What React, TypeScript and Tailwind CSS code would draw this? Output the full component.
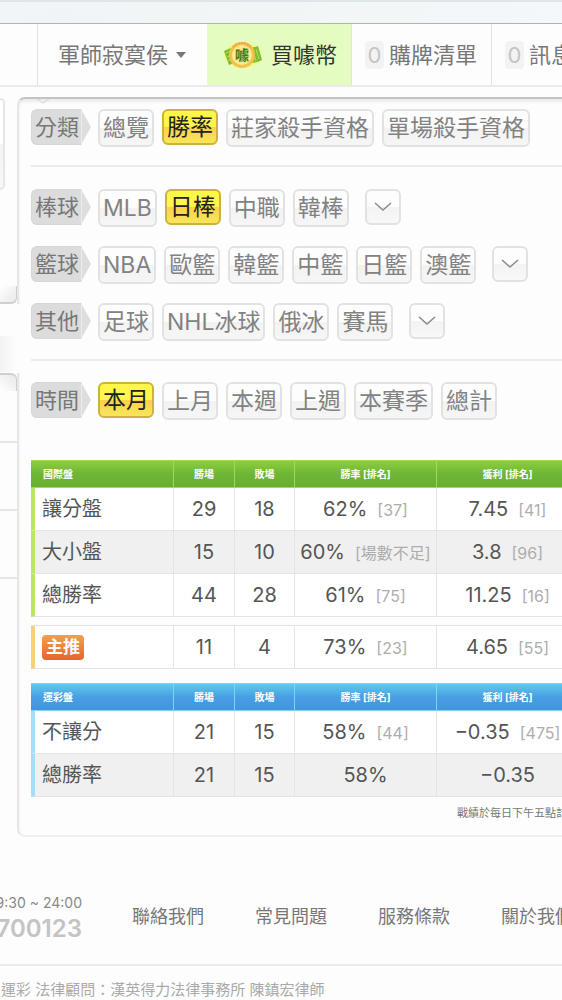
import React from 'react';

type Option = { text: string; active?: boolean };
type Group = { label: string; options: Option[]; more?: boolean };
type Row = {
  name: string;
  win: number;
  lose: number;
  rate: string;
  rateRank?: string;
  profit: string;
  profitRank?: string;
};

const category: Group = {
  label: '分類',
  options: [
    { text: '總覽' },
    { text: '勝率', active: true },
    { text: '莊家殺手資格' },
    { text: '單場殺手資格' },
  ],
};

const leagues: Group[] = [
  {
    label: '棒球',
    options: [{ text: 'MLB' }, { text: '日棒', active: true }, { text: '中職' }, { text: '韓棒' }],
    more: true,
  },
  {
    label: '籃球',
    options: [
      { text: 'NBA' },
      { text: '歐籃' },
      { text: '韓籃' },
      { text: '中籃' },
      { text: '日籃' },
      { text: '澳籃' },
    ],
    more: true,
  },
  {
    label: '其他',
    options: [{ text: '足球' }, { text: 'NHL冰球' }, { text: '俄冰' }, { text: '賽馬' }],
    more: true,
  },
];

const period: Group = {
  label: '時間',
  options: [
    { text: '本月', active: true },
    { text: '上月' },
    { text: '本週' },
    { text: '上週' },
    { text: '本賽季' },
    { text: '總計' },
  ],
};

const international: Row[] = [
  { name: '讓分盤', win: 29, lose: 18, rate: '62%', rateRank: '[37]', profit: '7.45', profitRank: '[41]' },
  { name: '大小盤', win: 15, lose: 10, rate: '60%', rateRank: '[場數不足]', profit: '3.8', profitRank: '[96]' },
  { name: '總勝率', win: 44, lose: 28, rate: '61%', rateRank: '[75]', profit: '11.25', profitRank: '[16]' },
];

const featured: Row[] = [
  { name: '主推', win: 11, lose: 4, rate: '73%', rateRank: '[23]', profit: '4.65', profitRank: '[55]' },
];

const lottery: Row[] = [
  { name: '不讓分', win: 21, lose: 15, rate: '58%', rateRank: '[44]', profit: '−0.35', profitRank: '[475]' },
  { name: '總勝率', win: 21, lose: 15, rate: '58%', profit: '−0.35' },
];

const tones = {
  green: {
    head: 'bg-linear-to-b from-[#8fd03f] via-[#6fb637] to-[#66ad31]',
    line: 'border-[#9ddb5a]',
    bar: 'border-l-[#b9e668]',
  },
  orange: { head: '', line: '', bar: 'border-l-[#fbcf7c]' },
  blue: {
    head: 'bg-linear-to-b from-[#62cdf0] via-[#489fe2] to-[#4093de]',
    line: 'border-[#7fd3f5]',
    bar: 'border-l-[#9fe0fc]',
  },
};

function CoinIcon() {
  return (
    <svg width="40" height="32" viewBox="0 0 40 32" aria-hidden="true">
      <ellipse cx="20" cy="16" rx="19" ry="13" fill="#f0fb7c" opacity="0.7" />
      <path d="M1 12 Q8 8 14 9 L24 22 Q14 22 6 26 Z" fill="#7dbb35" />
      <path d="M24 8 Q31 9 35 7 L39 21 Q31 25 23 24 Z" fill="#7dbb35" />
      <path d="M3 14 Q8 11 13 12 M4 18 Q8 15 12 16 M5 22 Q8 19 13 20 M33 10 L36 20 M30 11 L33 22" fill="none" stroke="#b4df62" />
      <circle cx="19" cy="16" r="13" fill="#f4c24a" />
      <circle cx="19" cy="16" r="10" fill="#fdea93" />
      <path d="M10 8 A12 12 0 0 1 28 8" fill="none" stroke="#f5a04a" strokeWidth="2" strokeDasharray="2 1" />
      <text x="19" y="21" textAnchor="middle" fontSize="14" fontWeight="700" fill="#35591c" stroke="#7fc142" strokeWidth="0.4">
        噱
      </text>
    </svg>
  );
}

// 分類標籤，右側帶箭頭
function GroupLabel({ text }: { text: string }) {
  return (
    <div className="mr-[7px] flex h-9 shrink-0 items-center">
      <span className="flex h-9 w-[50px] items-center justify-center rounded-l-md border border-r-0 border-[#d6d6d6] bg-[#dcdcdc] pl-px text-[22px] leading-9 text-[#777]">
        {text}
      </span>
      <svg width="10" height="36" viewBox="0 0 10 36" aria-hidden="true">
        <path d="M0 0 L10 18 L0 36 Z" fill="#dedede" />
        <path d="M0.5 0 V36" stroke="#ececec" />
      </svg>
    </div>
  );
}

function OptionButton({ text, active }: Option) {
  const look = active
    ? 'h-9 border-[#cdb23c] bg-linear-to-b from-[#fff64c] from-50% via-[#fad148] via-50% to-[#f8e65a] text-[#222]'
    : 'h-[38px] border-[#e2e2e2] bg-linear-to-b from-[#fdfdfd] from-50% via-[#f2f2f2] via-50% to-[#f6f6f6] text-[#828282]';
  return (
    <button
      type="button"
      aria-pressed={!!active}
      className={`flex shrink-0 items-center rounded-md border-2 px-[3px] text-[23px] leading-8 whitespace-nowrap ${look}`}
    >
      {text}
    </button>
  );
}

function FilterRow({ group }: { group: Group }) {
  return (
    <div className="flex h-[38px] items-start">
      <GroupLabel text={group.label} />
      <div className="flex gap-2">
        {group.options.map((o) => (
          <OptionButton key={o.text} {...o} />
        ))}
      </div>
      {group.more && (
        <button
          type="button"
          aria-label={`更多${group.label}`}
          className="ml-4 flex size-9 items-center justify-center rounded-md border-2 border-[#e2e2e2] bg-linear-to-b from-[#fdfdfd] from-50% via-[#f3f3f3] via-50% to-[#f8f8f8]"
        >
          <svg width="18" height="10" viewBox="0 0 18 10" fill="none" aria-hidden="true">
            <path d="M1 1 L9 8 L17 1" stroke="#8c8c8c" strokeWidth="1.6" />
          </svg>
        </button>
      )}
    </div>
  );
}

function ScoreTable({ title, rows, tone }: { title?: string; rows: Row[]; tone: keyof typeof tones }) {
  const { head, line, bar } = tones[tone];
  const th = `border-y border-l ${line} font-bold`;
  const td = 'border-b border-l border-[#e4e4e4] text-center whitespace-nowrap';
  return (
    <table
      className={`w-full table-fixed border-separate border-spacing-0 text-xl leading-6 text-[#555] ${
        title ? '' : 'border-t border-[#e4e4e4]'
      }`}
    >
      <colgroup>
        <col className="w-[142px]" />
        <col className="w-[61px]" />
        <col className="w-[60px]" />
        <col />
        <col />
      </colgroup>
      {title && (
        <thead>
          <tr className={`h-7 text-[10px] leading-3 text-white ${head}`}>
            <th scope="col" className={`border-y pl-3 text-left font-bold ${line}`}>{title}</th>
            <th scope="col" className={th}>勝場</th>
            <th scope="col" className={th}>敗場</th>
            <th scope="col" className={th}>勝率 [排名]</th>
            <th scope="col" className={th}>獲利 [排名]</th>
          </tr>
        </thead>
      )}
      <tbody>
        {rows.map((r, i) => (
          <tr key={r.name} className={`h-[43px] ${i % 2 ? 'bg-[#f0f0f0]' : 'bg-white'}`}>
            <th scope="row" className={`border-b border-l-4 border-[#e4e4e4] pl-[7px] text-left font-normal ${bar}`}>
              {tone === 'orange' ? (
                <span className="flex h-[25px] w-[42px] items-center justify-center rounded bg-linear-to-b from-[#f2a04c] to-[#e4652a] text-[17px] font-bold text-white">
                  {r.name}
                </span>
              ) : (
                r.name
              )}
            </th>
            <td className={td}>{r.win}</td>
            <td className={td}>{r.lose}</td>
            <td className={td}>
              {r.rate}
              {r.rateRank && <span className="ml-[10px] text-base leading-6 text-[#adadad]">{r.rateRank}</span>}
            </td>
            <td className={td}>
              {r.profit}
              {r.profitRank && <span className="ml-[10px] text-base leading-6 text-[#adadad]">{r.profitRank}</span>}
            </td>
          </tr>
        ))}
      </tbody>
    </table>
  );
}

function Header() {
  return (
    <header>
      <div className="h-6 border-t-2 border-b border-t-[#dfe6ea] border-b-[#b0b3b6] bg-linear-to-r from-[#f1f4f8] via-[#f1f6f5] to-[#f4f7fb]" />
      <nav className="flex h-[63px] border-b-2 border-[#ebebeb] text-[22px] leading-8 whitespace-nowrap text-[#777]">
        <button type="button" className="ml-[37px] flex w-[170px] shrink-0 items-center border-l border-[#e2e2e2] pl-5">
          軍師寂寞侯
          <svg className="ml-2" width="10" height="6" viewBox="0 0 10 6" aria-hidden="true">
            <path d="M0 0 H10 L5 6 Z" fill="#777" />
          </svg>
        </button>
        <a href="#coin" className="flex w-36 shrink-0 items-center bg-[#e4fcc0] pl-4 text-[#333]">
          <CoinIcon />
          <span className="ml-2">買噱幣</span>
        </a>
        <a href="#cart" className="flex w-[140px] shrink-0 items-center border-l border-[#e2e2e2] pl-[13px]">
          <span className="flex h-7 w-[19px] items-center justify-center rounded-sm bg-[#f3f3f3] text-[#c4c4c4]">0</span>
          <span className="ml-[5px]">購牌清單</span>
        </a>
        <a href="#message" className="flex shrink-0 items-center border-l border-[#e2e2e2] pl-[13px]">
          <span className="flex h-7 w-[19px] items-center justify-center rounded-sm bg-[#f3f3f3] text-[#c4c4c4]">0</span>
          <span className="ml-[5px]">訊息</span>
        </a>
      </nav>
    </header>
  );
}

// 左側選單，只露出右緣
function Sidebar() {
  return (
    <aside className="flex w-[17px] shrink-0 flex-col">
      <div className="mt-px mr-3 h-[92px] rounded-r-lg border-2 border-l-0 border-[#e6e6e6] bg-linear-to-b from-white from-50% via-[#f3f3f3] via-50% to-[#f8f8f8]" />
      <div className="mt-24 h-[18px] rounded-br-md border-r border-b-2 border-[#cfcfcf] bg-linear-to-br from-white to-[#e8e8e8]" />
      <div className="relative -mr-1 h-[69px] bg-[#fdfdfd] pt-8">
        <div className="mr-1 h-9 bg-linear-to-r from-[#f3f3f3] to-[#fdfdfd]" />
      </div>
      <div className="h-[18px] rounded-tr-md border-t-2 border-r border-[#cfcfcf] bg-linear-to-tr from-white to-[#e8e8e8]" />
      <div className="h-[52px] border-b-2 border-[#e6e6e6]" />
      <div className="h-[68px] border-b-2 border-[#e6e6e6]" />
      <div className="h-[68px] border-b-2 border-[#e6e6e6]" />
    </aside>
  );
}

function Footer() {
  return (
    <footer className="whitespace-nowrap">
      <div className="flex h-[129px] items-center border-b-2 border-[#ebebeb] pt-8">
        <div className="flex w-[82px] shrink-0 flex-col items-end">
          <span className="text-sm leading-6 text-[#888]">9:30 ~ 24:00</span>
          <span className="text-2xl leading-7 font-semibold text-[#c4c4c4]">700123</span>
        </div>
        <nav className="ml-[50px] flex gap-[51px] text-lg text-[#777]">
          <a href="#contact">聯絡我們</a>
          <a href="#faq">常見問題</a>
          <a href="#terms">服務條款</a>
          <a href="#about">關於我們</a>
        </nav>
      </div>
      <p className="pt-3 pl-px text-[15px] leading-6 text-[#aaa]">運彩 法律顧問：漢英得力法律事務所 陳鎮宏律師</p>
    </footer>
  );
}

export default function App() {
  return (
    <div className="w-full overflow-x-hidden bg-[#fdfdfd] font-[Inter,'Noto_Sans_CJK_TC',sans-serif]">
      <Header />
      <div className="mt-[10px] flex">
        <Sidebar />
        <main className="-mr-8 min-w-0 flex-1 rounded-l-lg border-t-2 border-b-2 border-l-2 border-t-[#c4c4c4] border-b-[#efefef] border-l-[#e6e6e6] pr-4 pl-3 shadow-[inset_0_3px_3px_#ececec]">
          <svg className="ml-[6px]" width="12" height="6" viewBox="0 0 12 6" fill="none" aria-hidden="true">
            <path d="M0 0 L6 4 L12 0" stroke="#d4d4d4" />
          </svg>
          <div className="mt-1">
            <FilterRow group={category} />
          </div>
          <hr className="mt-[18px] mb-[22px] border-t-2 border-[#ebebeb]" />
          <div className="flex flex-col gap-[19px]">
            {leagues.map((g) => (
              <FilterRow key={g.label} group={g} />
            ))}
          </div>
          <hr className="mt-[18px] mb-[21px] border-t-2 border-[#ebebeb]" />
          <FilterRow group={period} />
          <div className="mt-10">
            <ScoreTable title="國際盤" rows={international} tone="green" />
          </div>
          <div className="mt-2">
            <ScoreTable rows={featured} tone="orange" />
          </div>
          <div className="mt-[14px]">
            <ScoreTable title="運彩盤" rows={lottery} tone="blue" />
          </div>
          <p className="mt-2 mb-[14px] text-right text-[11px] leading-4 text-[#777]">戰績於每日下午五點計算</p>
        </main>
      </div>
      <Footer />
    </div>
  );
}
